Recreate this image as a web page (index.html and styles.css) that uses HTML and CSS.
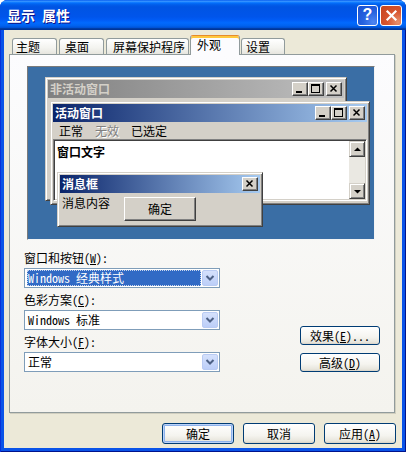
FILE: index.html
```html
<!DOCTYPE html>
<html lang="zh-CN">
<head>
<meta charset="utf-8">
<title>显示 属性</title>
<link rel="stylesheet" href="styles.css">
</head>
<body>
<div class="window">
  <div class="titlebar">
    <span class="title">显示 属性</span>
    <div class="caption-btns">
      <div class="xp-cap help">?</div>
      <div class="xp-cap close">
        <svg width="13" height="13" viewBox="0 0 13 13"><path d="M2.5 2.5 L10.5 10.5 M10.5 2.5 L2.5 10.5" stroke="#fff" stroke-width="2.2" stroke-linecap="square"/></svg>
      </div>
    </div>
  </div>
  <div class="client">
    <div class="tabs">
      <div class="tab t1">主题</div>
      <div class="tab t2">桌面</div>
      <div class="tab t3">屏幕保护程序</div>
      <div class="tab t4 sel">外观</div>
      <div class="tab t5">设置</div>
    </div>
    <div class="panel">
      <div class="preview">
        <div class="cw inactive">
          <div class="cap-title inactive-title">
            <span>非活动窗口</span>
            <div class="cbtns">
              <div class="cb"><svg width="14" height="12" viewBox="0 0 14 12"><rect x="3" y="8" width="6" height="2" fill="#000"/></svg></div>
              <div class="cb"><svg width="14" height="12" viewBox="0 0 14 12"><rect x="2.5" y="1.5" width="8" height="8" fill="none" stroke="#000"/><rect x="2" y="1" width="9" height="2" fill="#000"/></svg></div>
              <div class="cb gap"><svg width="14" height="12" viewBox="0 0 14 12"><path d="M3.5 2.5 L9.5 8.5 M9.5 2.5 L3.5 8.5" stroke="#000" stroke-width="1.5"/></svg></div>
            </div>
          </div>
        </div>
        <div class="cw active">
          <div class="cap-title active-title">
            <span>活动窗口</span>
            <div class="cbtns">
              <div class="cb"><svg width="14" height="12" viewBox="0 0 14 12"><rect x="3" y="8" width="6" height="2" fill="#000"/></svg></div>
              <div class="cb"><svg width="14" height="12" viewBox="0 0 14 12"><rect x="2.5" y="1.5" width="8" height="8" fill="none" stroke="#000"/><rect x="2" y="1" width="9" height="2" fill="#000"/></svg></div>
              <div class="cb gap"><svg width="14" height="12" viewBox="0 0 14 12"><path d="M3.5 2.5 L9.5 8.5 M9.5 2.5 L3.5 8.5" stroke="#000" stroke-width="1.5"/></svg></div>
            </div>
          </div>
          <div class="menu">
            <span class="mi">正常</span>
            <span class="mi disabled">无效</span>
            <span class="mi">已选定</span>
          </div>
          <div class="textarea">
            <span class="wtext">窗口文字</span>
            <div class="scrollbar">
              <div class="sbtn"><svg width="14" height="14" viewBox="0 0 14 14"><polygon points="4,9 11,9 7.5,5.5" fill="#000"/></svg></div>
              <div class="sbtn"><svg width="14" height="14" viewBox="0 0 14 14"><polygon points="4,6 11,6 7.5,9.5" fill="#000"/></svg></div>
            </div>
          </div>
        </div>
        <div class="cw msg">
          <div class="cap-title active-title">
            <span>消息框</span>
            <div class="cbtns">
              <div class="cb"><svg width="14" height="12" viewBox="0 0 14 12"><path d="M3.5 2.5 L9.5 8.5 M9.5 2.5 L3.5 8.5" stroke="#000" stroke-width="1.5"/></svg></div>
            </div>
          </div>
          <div class="msg-body">
            <span class="msg-text">消息内容</span>
            <div class="classic-btn">确定</div>
          </div>
        </div>
      </div>
      <div class="settings">
        <div class="fields">
          <div class="field">
            <div class="label">窗口和按钮(<u>W</u>):</div>
            <div class="combo">
              <div class="combo-value focused">Windows 经典样式</div>
              <div class="drop"><svg width="14" height="14" viewBox="0 0 14 14"><path d="M3.5 5 L7 8.5 L10.5 5" fill="none" stroke="#4D6185" stroke-width="2"/></svg></div>
            </div>
          </div>
          <div class="field">
            <div class="label">色彩方案(<u>C</u>):</div>
            <div class="combo">
              <div class="combo-value">Windows 标准</div>
              <div class="drop"><svg width="14" height="14" viewBox="0 0 14 14"><path d="M3.5 5 L7 8.5 L10.5 5" fill="none" stroke="#4D6185" stroke-width="2"/></svg></div>
            </div>
          </div>
          <div class="field">
            <div class="label">字体大小(<u>F</u>):</div>
            <div class="combo">
              <div class="combo-value">正常</div>
              <div class="drop"><svg width="14" height="14" viewBox="0 0 14 14"><path d="M3.5 5 L7 8.5 L10.5 5" fill="none" stroke="#4D6185" stroke-width="2"/></svg></div>
            </div>
          </div>
        </div>
        <div class="side-btns">
          <div class="btn side">效果(<u>E</u>)...</div>
          <div class="btn side">高级(<u>D</u>)</div>
        </div>
      </div>
    </div>
    <div class="actions">
      <div class="btn action default">确定</div>
      <div class="btn action">取消</div>
      <div class="btn action">应用(<u>A</u>)</div>
    </div>
  </div>
</div>
</body>
</html>
```

FILE: styles.css
```css
* { box-sizing: border-box; }

html, body {
  margin: 0;
  padding: 0;
  background: #ffffff;
}

body {
  font-family: "Noto Sans Mono CJK SC", "Noto Sans CJK SC", sans-serif;
  font-size: 12px;
  color: #000;
}

.window {
  width: 406px;
  height: 452px;
  display: flex;
  flex-direction: column;
  background: #0A53E8;
  border-radius: 8px 8px 0 0;
  box-shadow: inset 1px 0 #0831D9, inset -1px 0 #00138C, inset 0 -1px #00138C;
}

.titlebar {
  height: 30px;
  flex-shrink: 0;
  display: flex;
  align-items: center;
  justify-content: space-between;
  padding: 0 4px 0 7px;
  border-radius: 7px 7px 0 0;
  background: linear-gradient(#0058EE 0%, #3A93FF 4%, #288EFF 6%, #127DFF 8%, #036FFC 10%, #0262EE 14%, #0057E5 20%, #0054E3 24%, #0055EB 56%, #005BF5 66%, #026AFE 76%, #0062EF 86%, #0052D6 92%, #0040AB 94%, #003092 100%);
}

.title {
  color: #fff;
  font-weight: bold;
  font-size: 14px;
  line-height: 16px;
  text-shadow: 1px 1px #0F1089;
}

.caption-btns {
  display: flex;
  gap: 2px;
}

.xp-cap {
  width: 21px;
  height: 21px;
  border: 1px solid #fff;
  border-radius: 3px;
  display: flex;
  align-items: center;
  justify-content: center;
}

.help {
  background: radial-gradient(circle at 80% 85%, #4F86F2 0%, #2663E0 45%, #1A4FD0 100%);
  color: #fff;
  font-family: "Liberation Sans", sans-serif;
  font-weight: bold;
  font-size: 16px;
  line-height: 16px;
}

.close {
  width: 22px;
  background: radial-gradient(circle at 85% 85%, #E9926E 0%, #D8552F 45%, #C44420 100%);
}

.client {
  flex: 1;
  margin: 0 4px 4px;
  background: #ECE9D8;
  padding: 5px 7px 4px 5px;
  display: flex;
  flex-direction: column;
}

.tabs {
  height: 19px;
  flex-shrink: 0;
  display: flex;
  align-items: flex-end;
  padding-left: 3px;
}

.tab {
  height: 16px;
  border: 1px solid #919B9C;
  border-bottom: 0;
  border-radius: 3px 3px 0 0;
  background: linear-gradient(#FFFFFF, #F3F3EF 60%, #E6E5DE);
  font-size: 12px;
  line-height: 15px;
  padding-left: 4px;
  white-space: nowrap;
}

.t1 { width: 45px; padding-left: 3px; }
.t2 { width: 45px; margin-left: 2px; padding-left: 5px; }
.t3 { width: 83px; margin-left: 2px; padding-left: 6px; }
.t4 { width: 50px; margin-left: 1px; }
.t5 { width: 44px; margin-left: 1px; }

.tab.sel {
  height: 20px;
  margin-bottom: -1px;
  background: #FCFCFE;
  border-top-color: #E68B2C;
  box-shadow: inset 0 2px #FFC83C;
  line-height: 17px;
  padding-left: 6px;
  position: relative;
  z-index: 1;
}

.panel {
  height: 359px;
  flex-shrink: 0;
  border: 1px solid #919B9C;
  background: linear-gradient(#FCFCFE, #F4F3EE);
  padding-top: 11px;
  box-shadow: 1px 1px 0 #D0CEBF;
}

.preview {
  position: relative;
  margin-left: 17px;
  width: 348px;
  height: 174px;
  background: #3A6EA5;
  border: 1px solid;
  border-color: #7A7A7A #F4F4F4 #F4F4F4 #7A7A7A;
  overflow: hidden;
}

.cw {
  position: absolute;
  background: #D4D0C8;
  border: 1px solid;
  border-color: #D4D0C8 #404040 #404040 #D4D0C8;
  box-shadow: inset 1px 1px #FFFFFF, inset -1px -1px #808080;
  padding: 2px;
}

.inactive { left: 17px; top: 10px; width: 302px; height: 124px; }
.active { left: 22px; top: 34px; width: 320px; height: 104px; }
.msg { left: 29px; top: 105px; width: 206px; height: 55px; }

.cap-title {
  height: 18px;
  display: flex;
  align-items: center;
  justify-content: space-between;
  padding: 0 2px 0 2px;
  font-weight: bold;
  font-size: 12px;
  line-height: 14px;
  color: #fff;
}

.inactive-title {
  background: linear-gradient(to right, #808080, #C0C0C0);
  color: #D4D0C8;
}

.active-title {
  background: linear-gradient(to right, #0A246A, #A6CAF0);
}

.cbtns {
  display: flex;
}

.cb {
  width: 16px;
  height: 14px;
  background: #D4D0C8;
  border: 1px solid;
  border-color: #FFFFFF #404040 #404040 #FFFFFF;
  box-shadow: inset -1px -1px #808080;
  display: flex;
}

.cb.gap { margin-left: 2px; }

.menu {
  height: 17px;
  display: flex;
  align-items: center;
  font-size: 12px;
  line-height: 14px;
}

.mi { padding: 0 6px; }

.mi.disabled {
  color: #808080;
  text-shadow: 1px 1px #FFFFFF;
}

.textarea {
  height: 62px;
  display: flex;
  justify-content: space-between;
  background: #FFFFFF;
  border: 1px solid;
  border-color: #808080 #FFFFFF #FFFFFF #808080;
  box-shadow: inset 1px 1px #404040, inset -1px -1px #D4D0C8;
  padding: 1px;
}

.wtext {
  font-weight: bold;
  padding: 4px 2px;
  line-height: 14px;
}

.scrollbar {
  width: 16px;
  display: flex;
  flex-direction: column;
  justify-content: space-between;
  background: #EAE8E2;
}

.sbtn {
  width: 16px;
  height: 16px;
  background: #D4D0C8;
  border: 1px solid;
  border-color: #D4D0C8 #404040 #404040 #D4D0C8;
  box-shadow: inset 1px 1px #FFFFFF, inset -1px -1px #808080;
  display: flex;
}

.msg-body {
  display: flex;
  align-items: flex-start;
}

.msg-text {
  padding: 3px 0 0 2px;
  line-height: 14px;
}

.classic-btn {
  margin: 4px 0 0 14px;
  width: 72px;
  height: 24px;
  background: #D4D0C8;
  border: 1px solid;
  border-color: #FFFFFF #404040 #404040 #FFFFFF;
  box-shadow: inset -1px -1px #808080;
  display: flex;
  align-items: center;
  justify-content: center;
  line-height: 14px;
}

.settings {
  margin-top: 10px;
  padding: 0 14px;
  display: flex;
  justify-content: space-between;
  align-items: flex-end;
}

.fields {
  width: 196px;
  display: flex;
  flex-direction: column;
  gap: 4px;
}

.label {
  height: 16px;
  line-height: 16px;
  margin-bottom: 2px;
  white-space: nowrap;
}

.combo {
  height: 20px;
  border: 1px solid #7F9DB9;
  background: #FFFFFF;
  display: flex;
  align-items: center;
  justify-content: space-between;
  padding: 0 1px 0 2px;
}

.combo-value {
  height: 16px;
  line-height: 15px;
  padding: 0 1px;
  flex: 1;
  margin-right: 1px;
  white-space: nowrap;
}

.combo-value.focused {
  background: #316AC5;
  color: #FFFFFF;
  outline: 1px dotted #C8D6EE;
  outline-offset: -1px;
}

.drop {
  width: 16px;
  height: 16px;
  border: 1px solid #B9CBF3;
  border-radius: 2px;
  background: linear-gradient(#D5E1FC, #BCCEF8);
  display: flex;
  align-items: center;
  justify-content: center;
}

.side-btns {
  width: 80px;
  display: flex;
  flex-direction: column;
  gap: 8px;
}

.btn {
  border: 1px solid #003C74;
  border-radius: 3px;
  background: linear-gradient(#FFFFFF 0%, #F5F4EF 60%, #E7E5DC 90%, #D6D0C5 100%);
  display: flex;
  align-items: center;
  justify-content: center;
  line-height: 14px;
  white-space: nowrap;
}

.btn.side { height: 19px; }

.actions {
  margin-top: 10px;
  margin-right: -1px;
  display: flex;
  justify-content: flex-end;
  gap: 9px;
}

.btn.action {
  width: 72px;
  height: 21px;
}

.btn.default {
  box-shadow: inset 0 0 0 1px #BBD3F8, inset 0 0 0 2px #8DB2EC;
}

u { text-decoration: underline; text-underline-offset: 1px; }
```
